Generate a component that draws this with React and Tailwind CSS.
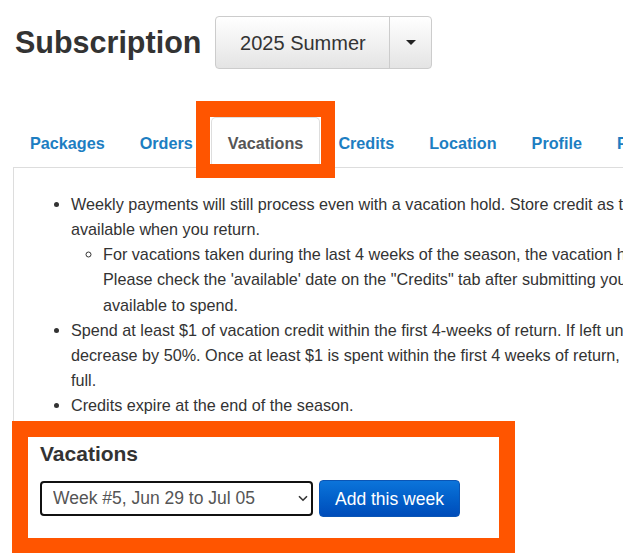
import { useState } from "react";

const tabs = ["Packages", "Orders", "Vacations", "Credits", "Location", "Profile", "Preferences"];

const weeks = [
  "Week #5, Jun 29 to Jul 05",
  "Week #6, Jul 06 to Jul 12",
  "Week #7, Jul 13 to Jul 19",
];

export default function App() {
  const [week, setWeek] = useState(weeks[0]);

  return (
    <div className="relative w-full h-[553px] overflow-hidden bg-white text-[#333] font-['Liberation_Sans',Arial,sans-serif]">
      {/* header */}
      <div className="flex items-center gap-[14px] pl-[15px] pt-[16px]">
        <h1 className="text-[30.5px] font-bold leading-[53px]">Subscription</h1>
        <div className="flex h-[53px] rounded-[4px] border border-[#ccc] bg-gradient-to-b from-white to-[#e4e4e4]">
          <button className="w-[173px] text-[20px] text-[#333]">2025 Summer</button>
          <button className="w-[42px] border-l border-[#ccc] flex items-center justify-center">
            <span className="w-0 h-0 border-x-[5px] border-x-transparent border-t-[5px] border-t-[#222]" />
          </button>
        </div>
      </div>

      {/* tabs + panel */}
      <div className="ml-[13px] mt-[48px] w-[1000px]">
        <ul className="flex border-b border-[#ddd]">
          {tabs.map((t) => (
            <li key={t} className="mr-[1px] -mb-px">
              <a
                className={
                  t === "Vacations"
                    ? "block px-[16px] pt-[15px] pb-[14px] leading-[20px] text-[16.2px] font-bold border border-[#ddd] border-b-transparent rounded-t-[5px] bg-white text-[#555]"
                    : "block px-[16px] pt-[15px] pb-[14px] leading-[20px] text-[16.2px] font-bold border border-transparent text-[#1d7ec2]"
                }
              >
                {t}
              </a>
            </li>
          ))}
        </ul>

        <div className="border-x border-[#ddd] pt-[24px] px-[16px] pb-[40px]">
          <ul className="list-disc pl-[41px] text-[16.2px] leading-[25.15px] whitespace-nowrap">
            <li>
              Weekly payments will still process even with a vacation hold. Store credit as the vacation amount will be
              <br />
              available when you return.
              <ul className="list-[circle] pl-[32px]">
                <li>
                  For vacations taken during the last 4 weeks of the season, the vacation hold credit may be delayed.
                  <br />
                  Please check the 'available' date on the "Credits" tab after submitting your vacation to see when it will be
                  <br />
                  available to spend.
                </li>
              </ul>
            </li>
            <li>
              Spend at least $1 of vacation credit within the first 4-weeks of return. If left unspent, the credit will
              <br />
              decrease by 50%. Once at least $1 is spent within the first 4 weeks of return, the credit will be available in
              <br />
              full.
            </li>
            <li>Credits expire at the end of the season.</li>
          </ul>

          <div className="pl-[10px] pt-[21px]">
            <h3 className="text-[21px] font-bold leading-[30px] text-[#333]">Vacations</h3>
            <div className="flex items-start gap-[6px] mt-[11px]">
              <div className="relative w-[273px] h-[35px] mt-[0.5px]">
                <select
                  value={week}
                  onChange={(e) => setWeek(e.target.value)}
                  className="appearance-none w-full h-full rounded-[4px] border-2 border-[#111] bg-white pl-[11px] pr-[24px] text-[17.5px] text-[#555] outline-none"
                >
                  {weeks.map((w) => (
                    <option key={w}>{w}</option>
                  ))}
                </select>
                <svg
                  className="absolute right-[5px] top-[14px] pointer-events-none"
                  width="10"
                  height="7"
                  viewBox="0 0 10 7"
                  fill="none"
                >
                  <path d="M1 1.2l4 4 4-4" stroke="#333" strokeWidth="1.6" />
                </svg>
              </div>
              <button className="h-[37px] px-[15px] rounded-[4px] border border-[#0a55b5] bg-gradient-to-b from-[#0c74da] to-[#004cba] text-white text-[17.5px]">
                Add this week
              </button>
            </div>
          </div>
        </div>
      </div>

      {/* highlight boxes */}
      <div className="absolute left-[196px] top-[101px] w-[139px] h-[77px] border-[14px] border-t-[16px] border-[#ff5500]" />
      <div className="absolute left-[12px] top-[421px] w-[503px] h-[133px] border-[16px] border-[#ff5500]" />
    </div>
  );
}
